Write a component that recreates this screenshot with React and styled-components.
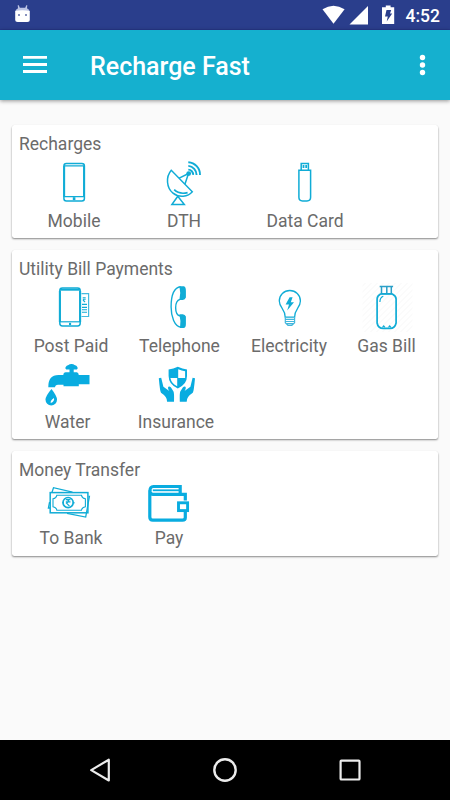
import React from "react";
import styled, { createGlobalStyle } from "styled-components";

const Global = createGlobalStyle`
  * { box-sizing: border-box; }
  body { margin: 0; background: #fafafa; font-family: Roboto, sans-serif; }
`;

const Screen = styled.div`
  display: flex;
  flex-direction: column;
  width: 450px;
  height: 800px;
  background: #fafafa;
  overflow: hidden;
`;

const StatusBar = styled.header`
  display: flex;
  justify-content: space-between;
  height: 30px;
  flex: none;
  background: #2a3e8c;
  box-shadow: inset 0 -1px #26388a;
`;

const StatusRight = styled.div`
  display: flex;
`;

const Clock = styled.span`
  width: 44.5px;
  color: #fff;
  font-size: 17.5px;
  font-weight: 500;
  line-height: 32px;
`;

const Toolbar = styled.div`
  display: flex;
  align-items: center;
  height: 70px;
  flex: none;
  padding: 0 16px 0 23px;
  background: #15b0cf;
  box-shadow: 0 1px 4px rgba(0, 0, 0, 0.42);
`;

const IconButton = styled.button`
  display: flex;
  padding: 0;
  border: 0;
  background: none;
`;

const Title = styled.h1`
  flex: 1;
  margin: 4px 0 0 43px;
  color: #fff;
  font-size: 25px;
  font-weight: 500;
  line-height: 32px;
`;

const Content = styled.main`
  display: flex;
  flex: 1;
  flex-direction: column;
  gap: 12px;
  padding: 25px 12px 0;
`;

const Card = styled.section`
  padding: 9px 0 8px;
  border-radius: 2.5px;
  background: #fff;
  box-shadow: 0 1.5px 2px -0.5px rgba(0, 0, 0, 0.45), 0 0 1px rgba(0, 0, 0, 0.12);
`;

const CardTitle = styled.h2`
  margin: 0 0 0 7px;
  color: #6b6b6b;
  font-size: 17.5px;
  font-weight: 400;
  line-height: 20px;
`;

const Row = styled.div`
  display: flex;
  height: ${(p) => p.$height}px;
`;

const Service = styled.div`
  display: flex;
  flex-direction: column;
  align-items: center;
  width: 90px;
  margin-left: ${(p) => p.$gap}px;
`;

const Label = styled.span`
  color: #6b6b6b;
  font-size: 17.5px;
  line-height: 20px;
  white-space: nowrap;
`;

const Art = styled.svg`
  display: block;
  flex: none;
  fill: none;
  stroke: #10acd6;
  stroke-width: 1.5;
`;

const NavBar = styled.nav`
  display: flex;
  justify-content: center;
  height: 60px;
  flex: none;
  background: #000;
`;

const NavButton = styled(IconButton)`
  width: 125px;
  height: 60px;
`;

const C = "#10acd6";

const art = {
  mobile: (
    <>
      <rect x="63.9" y="163.5" width="20.5" height="37.6" rx="2.5" />
      <path d="M64 165.9H84.4M64 196.6H84.4" strokeWidth="1.2" />
      <path d="M84 166V197M64.2 166V197" strokeWidth="1.9" />
      <rect x="72.8" y="197.2" width="2.6" height="2.9" fill={C} stroke="none" />
    </>
  ),
  dth: (
    <>
      <path d="M171.3 170.3C165.5 177 166.5 188 173 193.2C179 198 188 197 192.3 191.8Z" />
      <path d="M174.2 189.7Q179.5 194.8 187.6 192.6" strokeWidth="1.7" />
      <path d="M179.2 178.2L188.5 173.5L185 184" />
      <path d="M177.8 196.3L171.9 204.5H184.3Z" />
      <circle cx="188.7" cy="173.6" r="2.4" fill={C} stroke="none" />
      <path d="M188.3 169.6A5 5 0 0 1 193.1 174.9M188.3 165.9A9 9 0 0 1 196.6 174.9M188.3 162.2A12.5 12.5 0 0 1 200 174.9" strokeWidth="1.9" />
    </>
  ),
  usb: (
    <>
      <path d="M301.2 170.2V163.5H308.4V170.2" />
      <path d="M303.5 165V168M306.2 165V168" strokeWidth="1.8" />
      <path d="M298.9 170.3H310.6V197.3Q310.6 200.9 307 200.9H302.5Q298.9 200.9 298.9 197.3Z" />
    </>
  ),
  postpaid: (
    <>
      <path d="M81.5 293.7H88.6V316.5H81.5" strokeWidth="1.2" stroke="#45bbe0" />
      <path d="M82.7 297.7H85.7M82.8 299.3H85.7M83 300L85 302M82 304.4H87M82 307.4H87M82 309.8H87M82 312.2H87" strokeWidth="1.1" />
      <rect x="59.8" y="287.9" width="20.4" height="38" rx="2.6" />
      <path d="M60 289.7H80" strokeWidth="2" />
      <path d="M59.9 291V322M80.1 291V322" strokeWidth="2.1" />
      <path d="M60 321.8H80" strokeWidth="1.2" />
      <rect x="69" y="322.9" width="2.1" height="2.1" fill={C} stroke="none" />
    </>
  ),
  telephone: (
    <>
      <path d="M180.2 286.8C173 287.6 170.6 297.3 170.6 307S174 326.5 180.5 327.3M179.5 299.4C173.7 301 173.7 314.5 179.5 316" strokeWidth="1.4" />
      <path d="M178.9 286.2H183.4Q185.5 286.5 185.4 291.5V297.5Q184.6 299.9 182.3 300H178.9Q180.6 293 178.9 286.2ZM178.9 314.2H182.3Q184.6 314.5 185.4 316.6V324Q185.4 327.8 183 328H179.5Q180.7 321 178.9 314.2Z" fill={C} stroke="none" />
    </>
  ),
  bulb: (
    <>
      <path d="M285.2 317.2C285.2 309 279.3 307.7 279.3 301C279.3 294.8 284 290.5 289.8 290.5S300.4 294.8 300.4 301C300.4 307.7 294.6 309 294.6 317.2Z" strokeWidth="1.3" />
      <path d="M289.6 297.2L285.6 304.5H289L287.2 310.5L294 302.3H290.8L292.6 297.2Z" fill={C} stroke="none" />
      <path d="M285.3 317.5V322.7L288 325.3H291.8L294.6 322.7V317.5M285.4 319.4H294.5M285.4 321.5H294.5M286.5 323.6H293.4" strokeWidth="1.2" stroke="#42b7dd" />
    </>
  ),
  gas: (
    <>
      <defs>
        <pattern id="hatch" width="6" height="6" patternUnits="userSpaceOnUse">
          <path d="M-1 7L7 -1M-1 1L1 -1M5 7L7 5" stroke="#f6f6f6" strokeWidth="1" />
        </pattern>
      </defs>
      <rect x="362" y="283" width="50" height="49" fill="url(#hatch)" stroke="none" />
      <path d="M379.2 286.4H392.6M381 286V294M386.3 287V293.5M390.8 286V294M380.2 293.8H391.8" stroke="#2a9fc8" strokeWidth="1.5" />
      <path d="M376.6 299Q376.6 296 380 294H391.8Q395.6 296 395.6 299V323Q394.5 328.4 389.5 328.4H382.8Q377.5 328.4 376.6 323Z" strokeWidth="1.7" />
      <path d="M379.4 302Q379.5 297.4 382.8 296.3" strokeWidth="1.2" />
      <path d="M382 327.3L383.2 325.8L384.5 327.3M388 327.3L389.2 325.8L390.5 327.3" strokeWidth="1.1" />
    </>
  ),
  water: (
    <g fill="#09ace0" stroke="none">
      <path d="M65.8 369.4Q64.6 369.3 65 367.3Q66 365.4 68 365Q68.8 364 71 364T74 365Q76.2 365.4 77 367.3Q77.5 369.3 76.3 369.4H73.2V372.2H76.2Q78 372.2 78.3 375H89V384.3H78.3V386.2H63V384.7H57.5Q54.6 384.7 54.6 387.2H47.8Q47.6 375 58 375H62.8Q63 372.2 65.2 372.2H69V369.4Z" />
      <path d="M51 389Q45 396 45 399.7A5.7 5.7 0 0 0 56.5 399.7Q56.5 396 51 389Z" />
      <path d="M53.5 398Q54.2 401.5 50.2 403Q49.6 400.4 53.5 398Z" fill="#fff" />
    </g>
  ),
  insurance: (
    <g fill="#09ace0" stroke="none">
      <path d="M177.8 366.8Q182.5 369 187 369.5V376Q187 384.5 177.8 388.4Q168.6 384.5 168.6 376V369.5Q173.5 369 177.8 366.8Z" />
      <path d="M178.2 369.2Q181.8 370.9 185.1 371.3V377.9H178.2ZM170.4 377.9H177.2V386.2Q171.5 383.5 170.4 377.9Z" fill="#fff" />
      <path d="M158.8 378.2L161.2 377.7L163.4 386.7L169.3 391Q167.3 388 168.4 386.7Q169.5 385.9 171 387.5L173.5 391.5Q174.3 393 174 401.7H167.1Q167.4 396.8 161 392.7Q160 391.7 158.8 378.2Z" />
      <path d="M195 378.2L192.6 377.7L190.4 386.7L184.5 391Q186.5 388 185.4 386.7Q184.3 385.9 182.8 387.5L180.3 391.5Q179.5 393 179.8 401.7H186.7Q186.4 396.8 192.8 392.7Q193.8 391.7 195 378.2Z" />
    </g>
  ),
  cash: (
    <>
      <path d="M52 492.2L53.5 487.7L72.5 492.2M88.5 496.5H89.4L85.7 517.1L67 513.3M49.6 502L48.4 508H50.4" strokeWidth="1.3" />
      <rect x="50.2" y="492.6" width="37.7" height="20.2" strokeWidth="1.5" />
      <path d="M56.8 495.3H81.5Q82 498.2 85.4 498.7V506.7Q82 507.2 81.5 510.2H56.8Q56.3 507.2 53 506.7V498.7Q56.3 498.2 56.8 495.3Z" strokeWidth="1.1" />
      <circle cx="68.1" cy="502.6" r="5.1" strokeWidth="1.7" />
      <path d="M65.8 499.7H70.5M65.8 501.8H70.5M66.7 499.7Q70.8 500.7 66.5 503.2L69.5 506.2" strokeWidth="1.2" />
      <path d="M62.5 502.7H64M72.8 502.7H74.5" />
    </>
  ),
  wallet: (
    <g stroke="#09ace0">
      <path d="M185.3 500.5V494.3H152.5Q149.8 493.8 149.8 490.5V517Q149.8 520.2 152.8 520.2H182.5Q185.3 520.2 185.3 517.5V512" strokeWidth="3.2" />
      <path d="M150 491Q149.8 486.5 153.5 486.5H180.2V494" strokeWidth="3.2" />
      <path d="M152.8 490.3H180" strokeWidth="1.8" />
      <rect x="178.5" y="502.8" width="9.1" height="7.8" strokeWidth="2.9" />
    </g>
  ),
};

const sections = [
  {
    title: "Recharges",
    iconHeight: 57,
    rowHeight: 76,
    rows: [
      {
        y: 154,
        items: [
          { label: "Mobile", icon: "mobile", x: 29, gap: 17 },
          { label: "DTH", icon: "dth", x: 139, gap: 20 },
          { label: "Data Card", icon: "usb", x: 260, gap: 31 },
        ],
      },
    ],
  },
  {
    title: "Utility Bill Payments",
    iconHeight: 57,
    rowHeight: 76,
    rows: [
      {
        y: 279,
        items: [
          { label: "Post Paid", icon: "postpaid", x: 26, gap: 14 },
          { label: "Telephone", icon: "telephone", x: 134.5, gap: 18.5 },
          { label: "Electricity", icon: "bulb", x: 244, gap: 19.5 },
          { label: "Gas Bill", icon: "gas", x: 341.5, gap: 7.5 },
        ],
      },
      {
        y: 355,
        items: [
          { label: "Water", icon: "water", x: 22.5, gap: 10.5 },
          { label: "Insurance", icon: "insurance", x: 131, gap: 18.5 },
        ],
      },
    ],
  },
  {
    title: "Money Transfer",
    iconHeight: 48,
    rowHeight: 68,
    rows: [
      {
        y: 480,
        items: [
          { label: "To Bank", icon: "cash", x: 26, gap: 14 },
          { label: "Pay", icon: "wallet", x: 124, gap: 8 },
        ],
      },
    ],
  },
];

export default function App() {
  return (
    <Screen>
      <Global />
      <StatusBar>
        <svg width="40" height="30" fill="#fff">
          <path d="M15.3 11.2Q15.4 9.5 18 8.2L17.7 5.2H18.8L19.8 7.7H25.2L26.3 5.2H27.3L27 8.2Q29.6 9.5 29.7 11.2Z" fill="#bcc4e4" />
          <path d="M15.2 11Q22.5 9.5 29.8 11V19.5Q29.8 22 27.3 22H17.7Q15.2 22 15.2 19.5Z" />
          <path d="M18 14H20V16H18ZM25 14H27V16H25Z" fill="#8791be" />
        </svg>
        <StatusRight>
          <svg width="85" height="30" viewBox="320 0 85 30" fill="#fff">
            <path d="M321.5 9.3Q332.5 2.3 343.6 9.3L332.5 23.7Z" />
            <path d="M367 6V24.5H348.5Z" />
            <path d="M384.8 5.5H389.6V7.2H393.2V24H381V7.2H384.8Z" />
            <path d="M385.5 10H390.2L389 13.6H391.2L385.7 21.4L386.8 16.4H384Z" fill="#2a3e8c" />
          </svg>
          <Clock>4:52</Clock>
        </StatusRight>
      </StatusBar>
      <Toolbar>
        <IconButton aria-label="Menu">
          <svg width="24" height="20" fill="#fff">
            <path d="M0 1H24V3.8H0ZM0 8.1H24V10.9H0ZM0 15.1H24V17.9H0Z" />
          </svg>
        </IconButton>
        <Title>Recharge Fast</Title>
        <IconButton aria-label="More options">
          <svg width="23" height="24" fill="#fff">
            <circle cx="11.5" cy="4.5" r="2.7" />
            <circle cx="11.5" cy="12" r="2.7" />
            <circle cx="11.5" cy="19.5" r="2.7" />
          </svg>
        </IconButton>
      </Toolbar>
      <Content>
        {sections.map((s) => (
          <Card key={s.title}>
            <CardTitle>{s.title}</CardTitle>
            {s.rows.map((r) => (
              <Row key={r.y} $height={s.rowHeight}>
                {r.items.map((i) => (
                  <Service key={i.label} $gap={i.gap}>
                    <Art width="90" height={s.iconHeight} viewBox={`${i.x} ${r.y} 90 ${s.iconHeight}`}>
                      {art[i.icon]}
                    </Art>
                    <Label>{i.label}</Label>
                  </Service>
                ))}
              </Row>
            ))}
          </Card>
        ))}
      </Content>
      <NavBar>
        <NavButton aria-label="Back">
          <svg width="125" height="60" fill="none" stroke="#ececec" strokeWidth="2.2" strokeLinejoin="round">
            <path d="M108.8 19.7V40.5L91.2 30.1Z" transform="translate(-38 0)" />
          </svg>
        </NavButton>
        <NavButton aria-label="Home">
          <svg width="125" height="60" fill="none" stroke="#ececec" strokeWidth="2.4">
            <circle cx="62" cy="30" r="10.7" />
          </svg>
        </NavButton>
        <NavButton aria-label="Recent apps">
          <svg width="125" height="60" fill="none" stroke="#ececec" strokeWidth="2.2">
            <rect x="52.6" y="20.6" width="18.9" height="18.9" rx="0.8" />
          </svg>
        </NavButton>
      </NavBar>
    </Screen>
  );
}
